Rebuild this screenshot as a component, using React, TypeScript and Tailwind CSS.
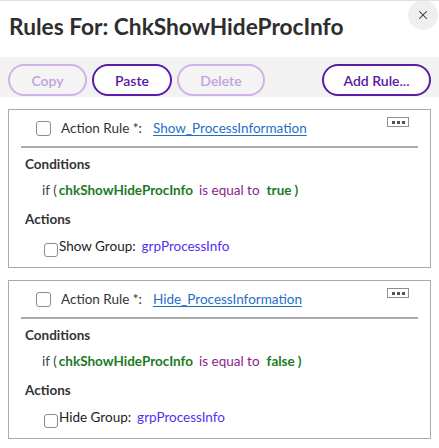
import { X } from "lucide-react";

const rules = [
  { id: "show", name: "Show_ProcessInformation", value: "true", action: "Show Group:" },
  { id: "hide", name: "Hide_ProcessInformation", value: "false", action: "Hide Group:" },
];

function Checkbox({ className = "" }: { className?: string }) {
  return (
    <span
      className={`inline-block w-[14px] h-[14px] rounded-[3px] border border-[#8c8c8c] bg-white shrink-0 ${className}`}
    />
  );
}

function ToolButton({ label, disabled, width }: { label: string; disabled?: boolean; width: string }) {
  return (
    <button
      className={`h-[32px] ${width} rounded-full border-2 text-[14px] font-semibold ${
        disabled
          ? "border-[#cdb3e8] text-[#bfa3de] bg-[#f4f4f4]"
          : "border-[#5a1da6] text-[#56189e] bg-white"
      }`}
    >
      {label}
    </button>
  );
}

export default function App() {
  return (
    <div className="w-[439px] h-[448px] bg-white border-t border-[#e2e2e2] overflow-hidden font-['Lato',sans-serif] text-[#333]">
      <div className="flex h-[56px] pl-[9px] pr-[1px]">
        <h1 className="pt-[13px] text-[22.7px] leading-[26px] font-bold text-[#2e2e2e]">
          Rules For: ChkShowHideProcInfo
        </h1>
        <button className="ml-auto w-[30px] h-[30px] rounded-full bg-[#efefef] flex items-center justify-center -mt-px">
          <X className="w-[14px] h-[14px] text-[#333]" strokeWidth={1.75} />
        </button>
      </div>

      <div className="bg-[#f2f2f2] flex gap-[5px] px-[8px] pt-[7px] pb-px">
        <ToolButton label="Copy" disabled width="w-[79px]" />
        <ToolButton label="Paste" width="w-[80px]" />
        <ToolButton label="Delete" disabled width="w-[88px]" />
        <div className="ml-auto">
          <ToolButton label="Add Rule..." width="w-[109px]" />
        </div>
      </div>

      <div className="px-[8px] pt-[12px] flex flex-col gap-[12px]">
        {rules.map((rule) => (
          <div key={rule.id} className="h-[159px] border border-[#a9a9a9] flex flex-col text-[13.5px]">
            <div className="h-[36px] flex items-start pl-[27px]">
              <div className="flex items-center h-[37px]">
                <Checkbox className="w-[15px] h-[15px]" />
                <span className="ml-[10px]">Action Rule *:</span>
                <a className="ml-[11px] text-[#1f6fc5] underline underline-offset-2 decoration-1">{rule.name}</a>
              </div>
              <div className="ml-auto mr-[21px] mt-[7px] w-[22px] h-[10px] border border-[#8e8e8e] flex items-center justify-center gap-[2px]">
                <span className="w-[3px] h-[3px] bg-[#555]" />
                <span className="w-[3px] h-[3px] bg-[#555]" />
                <span className="w-[3px] h-[3px] bg-[#555]" />
              </div>
            </div>
            <div className="mx-[12px] h-[2px] bg-[#aaaaaa]" />
            <div className="pl-[16px] mt-[7px] leading-[18px] font-bold text-[#333]">Conditions</div>
            <div className="pl-[33px] mt-[8px] leading-[18px] flex">
              <span className="text-[#444]">if (</span>
              <span className="ml-[2px] font-bold text-[#1b7a1f]">chkShowHideProcInfo</span>
              <span className="ml-[6px] text-[#8b1d8b]">is equal to</span>
              <span className="ml-[7px] font-bold text-[#1b7a1f]">{rule.value}</span>
              <span className="ml-[3px] font-bold text-[#1b7a1f]">)</span>
            </div>
            <div className="pl-[16px] mt-[11px] leading-[18px] font-bold text-[#333]">Actions</div>
            <div className="pl-[35px] mt-[9px] flex items-start leading-[18px]">
              <Checkbox className="mt-[6px]" />
              <span className="ml-px text-[#222]">{rule.action}</span>
              <span className="ml-[6px] text-[#5331f2]">grpProcessInfo</span>
            </div>
          </div>
        ))}
      </div>
    </div>
  );
}
